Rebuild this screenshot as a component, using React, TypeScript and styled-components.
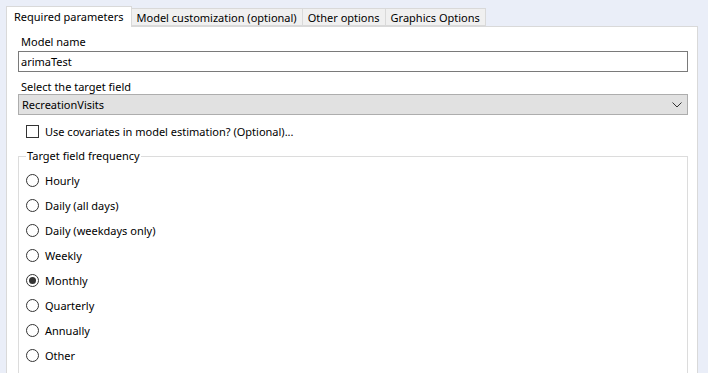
import React, { useState } from "react";
import styled, { createGlobalStyle } from "styled-components";

const GlobalStyle = createGlobalStyle`
  html, body {
    margin: 0;
    padding: 0;
    background: #eaeef8;
    font-family: "Noto Sans", "Open Sans", sans-serif;
    font-size: 11px;
    color: #000;
  }
`;

const Page = styled.div`
  width: 708px;
  height: 373px;
  overflow: hidden;
  padding: 5px 0 0 6px;
  box-sizing: border-box;
`;

const TabStrip = styled.div`
  display: flex;
  align-items: flex-end;
  height: 21px;
`;

const Tab = styled.div<{ $active?: boolean }>`
  box-sizing: border-box;
  height: ${(p) => (p.$active ? "21px" : "18px")};
  padding: ${(p) => (p.$active ? "0 7px 2px 7px" : "0 5px 0 5px")};
  display: flex;
  align-items: center;
  background: ${(p) => (p.$active ? "#fff" : "#f0f0f0")};
  border: 1px solid #d9d9d9;
  border-bottom: ${(p) => (p.$active ? "none" : "1px solid #d9d9d9")};
  margin-left: ${(p) => (p.$active ? "0" : "-1px")};
  position: relative;
  z-index: ${(p) => (p.$active ? 2 : 1)};
  margin-bottom: ${(p) => (p.$active ? "-1px" : "0")};
  white-space: nowrap;
`;

const Panel = styled.div`
  box-sizing: border-box;
  width: 692px;
  height: 400px;
  background: #fff;
  border: 1px solid #d9d9d9;
  padding: 7px 9px 0 11px;
`;

const FieldLabel = styled.div`
  padding-left: 3px;
  line-height: 15px;
  height: 15px;
`;

const TextInput = styled.input`
  box-sizing: border-box;
  display: block;
  width: 100%;
  height: 21px;
  margin: 2px 0 7px;
  border: 1px solid #7a7a7a;
  padding: 0 2px;
  font: inherit;
  color: #000;
  outline: none;
`;

const SelectBox = styled.div`
  box-sizing: border-box;
  height: 21px;
  border: 1px solid #adadad;
  background: #e1e1e1;
  display: flex;
  align-items: center;
  justify-content: space-between;
  padding: 0 5px 0 3px;
`;

const CheckRow = styled.label`
  display: flex;
  align-items: center;
  gap: 6px;
  margin: 9px 0 0 8px;
  height: 14px;
`;

const CheckBox = styled.span`
  box-sizing: border-box;
  width: 13px;
  height: 13px;
  border: 1px solid #333;
  background: #fff;
`;

const GroupBox = styled.fieldset`
  margin: 11px 0 0;
  padding: 10px 0 40px 7px;
  border: 1px solid #dcdcdc;
  min-width: 0;
`;

const Legend = styled.legend`
  padding: 0 1px;
  margin: 0;
  line-height: 14px;
`;

const RadioList = styled.div`
  display: flex;
  flex-direction: column;
  gap: 10px;
`;

const RadioRow = styled.label`
  display: flex;
  align-items: center;
  gap: 6px;
  height: 15px;
`;

const RadioCircle = styled.span<{ $checked?: boolean }>`
  box-sizing: border-box;
  width: 13px;
  height: 13px;
  border-radius: 50%;
  border: 1px solid #333;
  background: #fff;
  display: flex;
  align-items: center;
  justify-content: center;
  &::after {
    content: "";
    width: 7px;
    height: 7px;
    border-radius: 50%;
    background: ${(p) => (p.$checked ? "#333" : "transparent")};
  }
`;

const tabs = [
  "Required parameters",
  "Model customization (optional)",
  "Other options",
  "Graphics Options",
];

const frequencies = [
  "Hourly",
  "Daily (all days)",
  "Daily (weekdays only)",
  "Weekly",
  "Monthly",
  "Quarterly",
  "Annually",
  "Other",
];

const Chevron = () => (
  <svg width="10" height="6" viewBox="0 0 10 6">
    <path d="M0.5 0.5 L5 5 L9.5 0.5" fill="none" stroke="#333" strokeWidth="1" />
  </svg>
);

export default function App() {
  const [freq] = useState("Monthly");
  return (
    <Page>
      <GlobalStyle />
      <TabStrip>
        {tabs.map((t, i) => (
          <Tab key={t} $active={i === 0}>
            {t}
          </Tab>
        ))}
      </TabStrip>
      <Panel>
        <FieldLabel>Model name</FieldLabel>
        <TextInput defaultValue="arimaTest" />
        <FieldLabel>Select the target field</FieldLabel>
        <SelectBox>
          <span>RecreationVisits</span>
          <Chevron />
        </SelectBox>
        <CheckRow>
          <CheckBox />
          <span>Use covariates in model estimation? (Optional)...</span>
        </CheckRow>
        <GroupBox>
          <Legend>Target field frequency</Legend>
          <RadioList>
            {frequencies.map((f) => (
              <RadioRow key={f}>
                <RadioCircle $checked={f === freq} />
                <span>{f}</span>
              </RadioRow>
            ))}
          </RadioList>
        </GroupBox>
      </Panel>
    </Page>
  );
}
